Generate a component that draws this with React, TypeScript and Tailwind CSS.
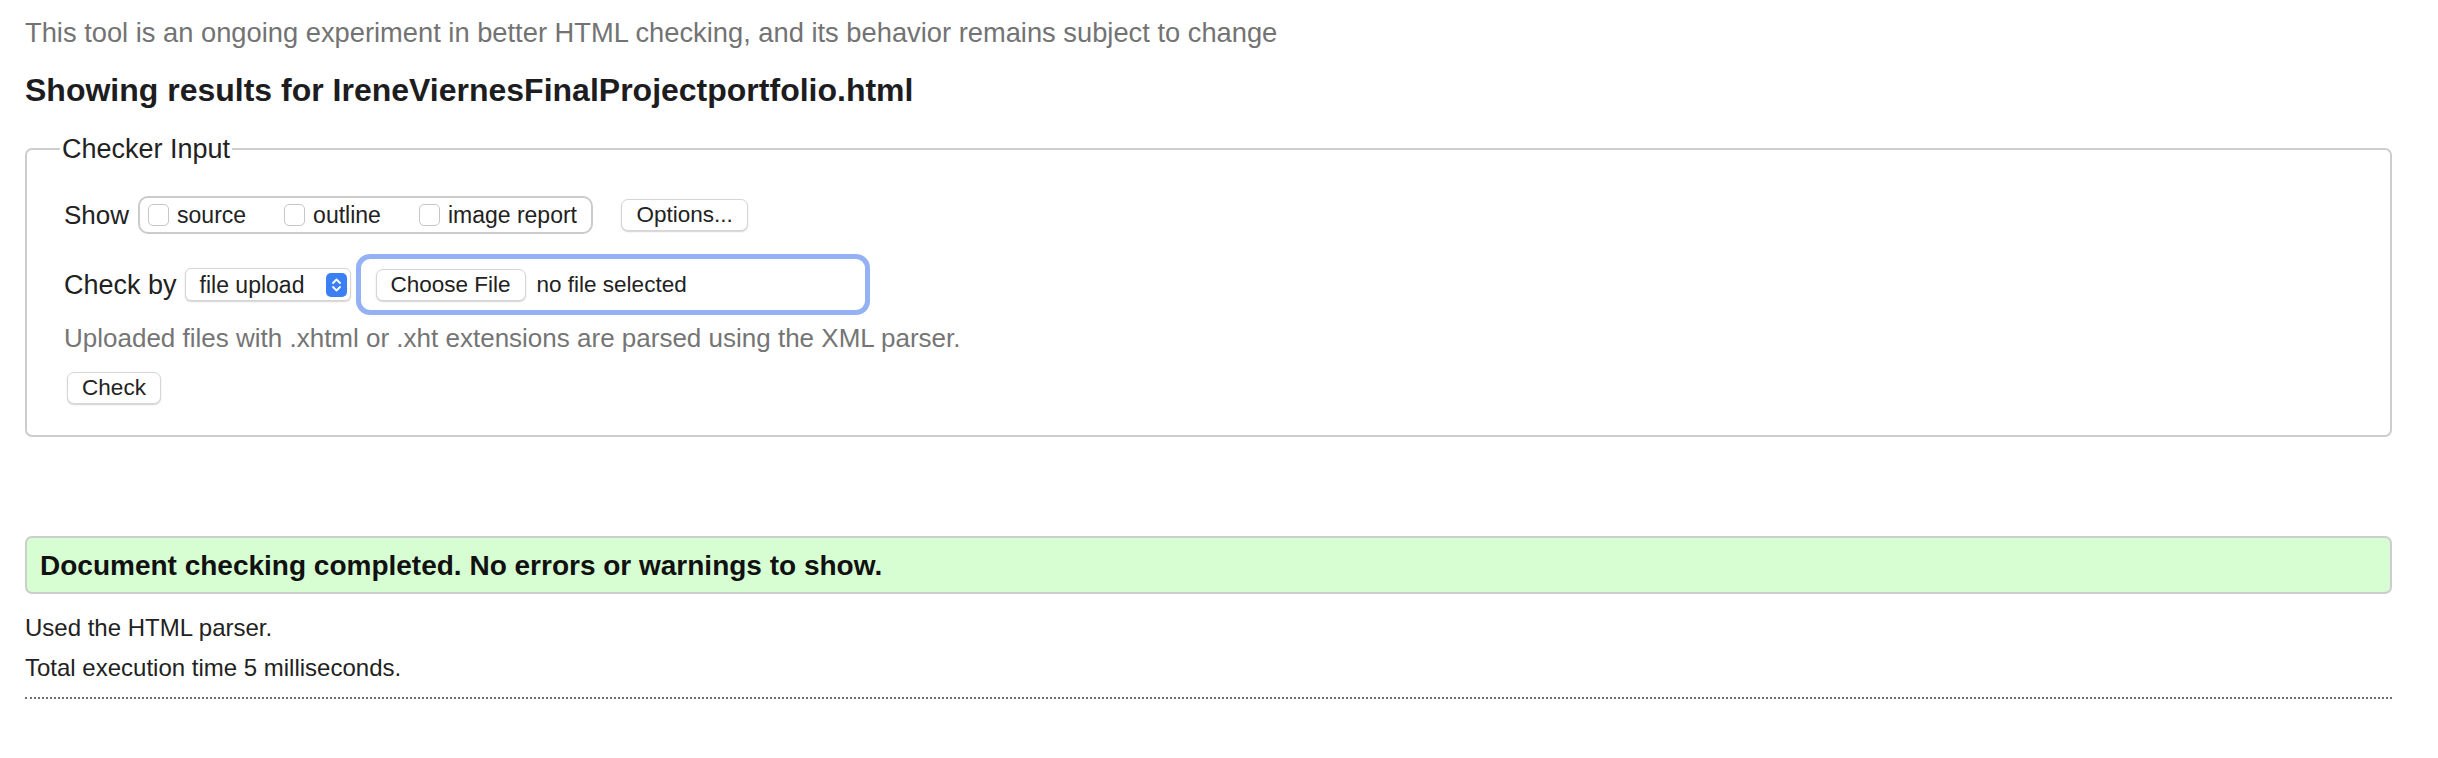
import React from 'react';

const font = { fontFamily: '"Liberation Sans", Arial, Helvetica, sans-serif' };

const Checkbox: React.FC<{ label: string }> = ({ label }) => (
  <label className="flex items-center gap-[8px]">
    <span className="inline-block w-[21px] h-[22px] rounded-[5px] border-[1.5px] border-[#c6c6c6] bg-white" />
    <span className="text-[23px] leading-[28px] text-[#222]">{label}</span>
  </label>
);

const MacButton: React.FC<{ children: React.ReactNode; className?: string }> = ({ children, className = '' }) => (
  <button
    className={`h-[32px] rounded-[7px] border border-[#d6d6d6] bg-white text-[22.5px] leading-[28px] text-[#222] shadow-[0_1px_1.5px_rgba(0,0,0,0.18)] ${className}`}
  >
    {children}
  </button>
);

const Stepper = () => (
  <span className="flex items-center justify-center w-[21px] h-[24px] rounded-[5px] bg-[#3b7ff5]">
    <svg width="11" height="16" viewBox="0 0 11 16" fill="none" stroke="white" strokeWidth="1.8" strokeLinecap="round" strokeLinejoin="round">
      <path d="M2 6 L5.5 2.5 L9 6" />
      <path d="M2 10 L5.5 13.5 L9 10" />
    </svg>
  </span>
);

export default function App() {
  return (
    <div className="bg-white min-h-[758px] pl-[25px] pr-[46px]" style={font}>
      <p className="pt-[18px] text-[27.3px] leading-[30px] text-[#737373]">
        This tool is an ongoing experiment in better HTML checking, and its behavior remains subject to change
      </p>
      <h2 className="mt-[24px] text-[32px] leading-[36px] font-bold text-[#1d1d1f]">
        Showing results for IreneViernesFinalProjectportfolio.html
      </h2>

      <fieldset className="mt-[26px] border-2 border-[#cdcdcd] rounded-[7px] pl-[37px] pr-[20px] pb-[31px]">
        <legend className="-ml-[4px] px-[2px] text-[27px] leading-[30px] text-[#222]">Checker Input</legend>

        <div className="mt-[32px] flex items-center">
          <span className="text-[26px] leading-[30px] text-[#222]">Show</span>
          <div className="ml-[9px] h-[38px] w-[455px] flex items-center rounded-[10px] border-2 border-[#cbcbcb] pl-[8px] gap-[38px]">
            <Checkbox label="source" />
            <Checkbox label="outline" />
            <Checkbox label="image report" />
          </div>
          <MacButton className="ml-[28px] w-[127px]">Options...</MacButton>
        </div>

        <div className="mt-[20px] flex items-center">
          <span className="text-[27px] leading-[30px] text-[#222]">Check by</span>
          <div className="ml-[8px] h-[33px] w-[166px] flex items-center justify-between rounded-[6px] border border-[#d6d6d6] bg-white pl-[14px] pr-[3px] shadow-[0_1px_1.5px_rgba(0,0,0,0.18)]">
            <span className="text-[23px] leading-[28px] text-[#222]">file upload</span>
            <Stepper />
          </div>
          <div className="ml-[5px] h-[61px] w-[514px] flex items-center rounded-[14px] border-[5px] border-[#94b2f3] pl-[15px]">
            <MacButton className="w-[150px]">Choose File</MacButton>
            <span className="ml-[11px] text-[22.5px] leading-[28px] text-[#222]">no file selected</span>
          </div>
        </div>

        <p className="mt-[8px] text-[26px] leading-[30px] text-[#757575]">
          Uploaded files with .xhtml or .xht extensions are parsed using the XML parser.
        </p>

        <MacButton className="mt-[19px] ml-[3px] w-[94px]">Check</MacButton>
      </fieldset>

      <div className="mt-[99px] rounded-[7px] border-2 border-[#cdcdcd] bg-[#d7fdd3] pl-[13px] pt-[12px] pb-[10px]">
        <p className="text-[28px] leading-[32px] font-bold text-[#111]">
          Document checking completed. No errors or warnings to show.
        </p>
      </div>

      <p className="mt-[20px] text-[24px] leading-[28px] text-[#222]">Used the HTML parser.</p>
      <p className="mt-[12px] text-[24px] leading-[28px] text-[#222]">Total execution time 5 milliseconds.</p>
      <div className="mt-[15px] border-t-2 border-dotted border-[#6f6f6f]" />
    </div>
  );
}
